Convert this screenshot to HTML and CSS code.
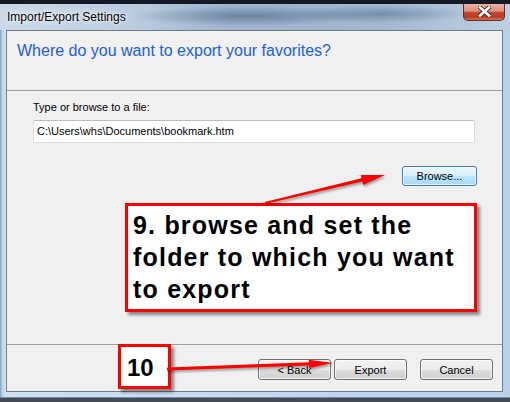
FILE: index.html
```html
<!DOCTYPE html>
<html lang="en">
<head>
  <meta charset="UTF-8" />
  <title>Import/Export Settings</title>
  <link rel="stylesheet" href="styles.css">
</head>
<body>

  <div class="window">
    <!-- barra de titulo -->
    <div class="titlebar">
      <span class="title">Import/Export Settings</span>
      <div class="close">
        <svg width="13" height="11" viewBox="0 0 13 11">
          <path d="M2 1.5 L11 9.5 M11 1.5 L2 9.5" stroke="#4a2a28" stroke-width="4.4" stroke-linecap="square"/>
          <path d="M2 1.5 L11 9.5 M11 1.5 L2 9.5" stroke="#fff" stroke-width="2.6" stroke-linecap="square"/>
        </svg>
      </div>
    </div>

    <div class="content">
      <div class="header">
        <h1>Where do you want to export your favorites?</h1>
      </div>

      <div class="main">
        <label class="label">Type or browse to a file:</label>
        <div class="field">C:\Users\whs\Documents\bookmark.htm</div>
        <div class="browse-row">
          <button class="btn btn-default">Browse...</button>
        </div>
      </div>

      <div class="footer">
        <button class="btn">&lt; Back</button>
        <button class="btn">Export</button>
        <button class="btn btn-cancel">Cancel</button>
      </div>
    </div>
  </div>

  <!-- anotacoes por cima da janela -->
  <div class="note note-9">9. browse and set the<br>folder to which you want<br>to export</div>
  <div class="note note-10">10</div>

  <svg class="arrows" width="510" height="402" viewBox="0 0 510 402">
    <polygon fill="#ff0000" points="265.3,204 362.4,181.6 363.1,185.1 385,175 360.8,175 361.5,178.2 264.7,201.9"/>
    <polygon fill="#ff0000" points="167,370.4 309,365.6 309.1,368 333,363 308.9,359.8 308.9,362.2 167,367.6"/>
  </svg>

</body>
</html>
```

FILE: styles.css
```css
* {
  box-sizing: border-box;
}

body {
  margin: 0;
  width: 510px;
  height: 402px;
  overflow: hidden;
  position: relative;
  font-family: "Liberation Sans", Arial, sans-serif;
  font-size: 11px;
  color: #000;
  background: linear-gradient(#131a25 0, #131a25 4px, #454a52 4px);
}

.window {
  margin-top: 4px;
  height: 394px;
  display: flex;
  flex-direction: column;
  background: linear-gradient(to right, #7c9fc4 0, #b9d0e8 2px, #cfe0f1 5px, #b9d0e8 100%);
  box-shadow: inset 0 -1px 0 #6a8db3;
}

/* titulo com vidro borrado */
.titlebar {
  height: 26px;
  display: flex;
  align-items: flex-start;
  padding-left: 7px;
  background:
    radial-gradient(ellipse 120px 10px at 250px 12px, rgba(60, 90, 125, 0.55), rgba(60, 90, 125, 0)),
    radial-gradient(ellipse 90px 9px at 380px 10px, rgba(70, 100, 135, 0.5), rgba(70, 100, 135, 0)),
    linear-gradient(to right, #cbd9e7 0, #bccde0 25%, #9db4cc 45%, #a2b8cf 75%, #bdd0e3 100%);
}

.title {
  padding-top: 6px;
  font-size: 12px;
  line-height: 15px;
  text-shadow: 0 0 6px #fff, 0 0 3px #fff;
}

.close {
  margin-left: auto;
  margin-right: 5px;
  width: 42px;
  height: 17px;
  display: flex;
  align-items: center;
  justify-content: center;
  padding-bottom: 1px;
  border: 1px solid #6b2b22;
  border-top: none;
  border-radius: 0 0 5px 5px;
  background: linear-gradient(#eab0a2 0, #dc917e 45%, #c54a30 52%, #b73b24 80%, #d47257 100%);
}

.content {
  flex: 1;
  margin: 0 7px 6px 6px;
  border: 1px solid #6f7c8a;
  background: #f0f0f0;
  display: flex;
  flex-direction: column;
}

.header {
  height: 60px;
  border-bottom: 1px solid #a0a0a0;
  padding: 10px 10px 0;
}

.header h1 {
  margin: 0;
  font-size: 16px;
  line-height: 20px;
  font-weight: normal;
  color: #1c60d4;
}

.main {
  flex: 1;
  padding: 9px 27px 0 26px;
  display: flex;
  flex-direction: column;
}

.label {
  line-height: 14px;
  margin-bottom: 6px;
}

.field {
  height: 23px;
  padding: 0 3px;
  line-height: 21px;
  background: #fff;
  border: 1px solid #dadce2;
  border-top-color: #b9bcc3;
  border-radius: 2px;
}

.browse-row {
  display: flex;
  justify-content: flex-end;
  margin-top: 23px;
  margin-right: -2px;
}

.btn {
  width: 73px;
  height: 21px;
  padding: 0;
  font-family: inherit;
  font-size: 11px;
  color: #000;
  border: 1px solid #707070;
  border-radius: 3px;
  background: linear-gradient(#f2f2f2 0, #ebebeb 50%, #dddddd 50%, #cfcfcf 100%);
  box-shadow: inset 0 0 0 1px rgba(255, 255, 255, 0.7);
}

.btn-default {
  width: 75px;
  height: 20px;
  border-color: #3c7fb1;
  background: linear-gradient(#eaf6fd 0, #d9f0fc 50%, #bee6fd 50%, #a7d9f5 100%);
}

.footer {
  height: 47px;
  border-top: 1px solid #a0a0a0;
  display: flex;
  justify-content: flex-end;
  gap: 3px;
  padding: 14px 9px 0 0;
}

.btn-cancel {
  margin-left: 10px;
}

/* caixas vermelhas do tutorial */
.note {
  position: absolute;
  background: #fff;
  border: 3px solid #ff0000;
  box-shadow: 3px 3px 3px rgba(0, 0, 0, 0.45);
  font-weight: bold;
  color: #000;
}

.note-9 {
  left: 125px;
  top: 203px;
  width: 352px;
  height: 109px;
  padding: 3px 0 0 5px;
  font-size: 25px;
  line-height: 32px;
  letter-spacing: 1.2px;
}

.note-10 {
  left: 118px;
  top: 344px;
  width: 53px;
  height: 45px;
  padding: 9px 0 0 6px;
  font-size: 24px;
  line-height: 24px;
}

.arrows {
  position: absolute;
  left: 0;
  top: 0;
  pointer-events: none;
  filter: drop-shadow(1px 2px 1px rgba(0, 0, 0, 0.35));
}
```
